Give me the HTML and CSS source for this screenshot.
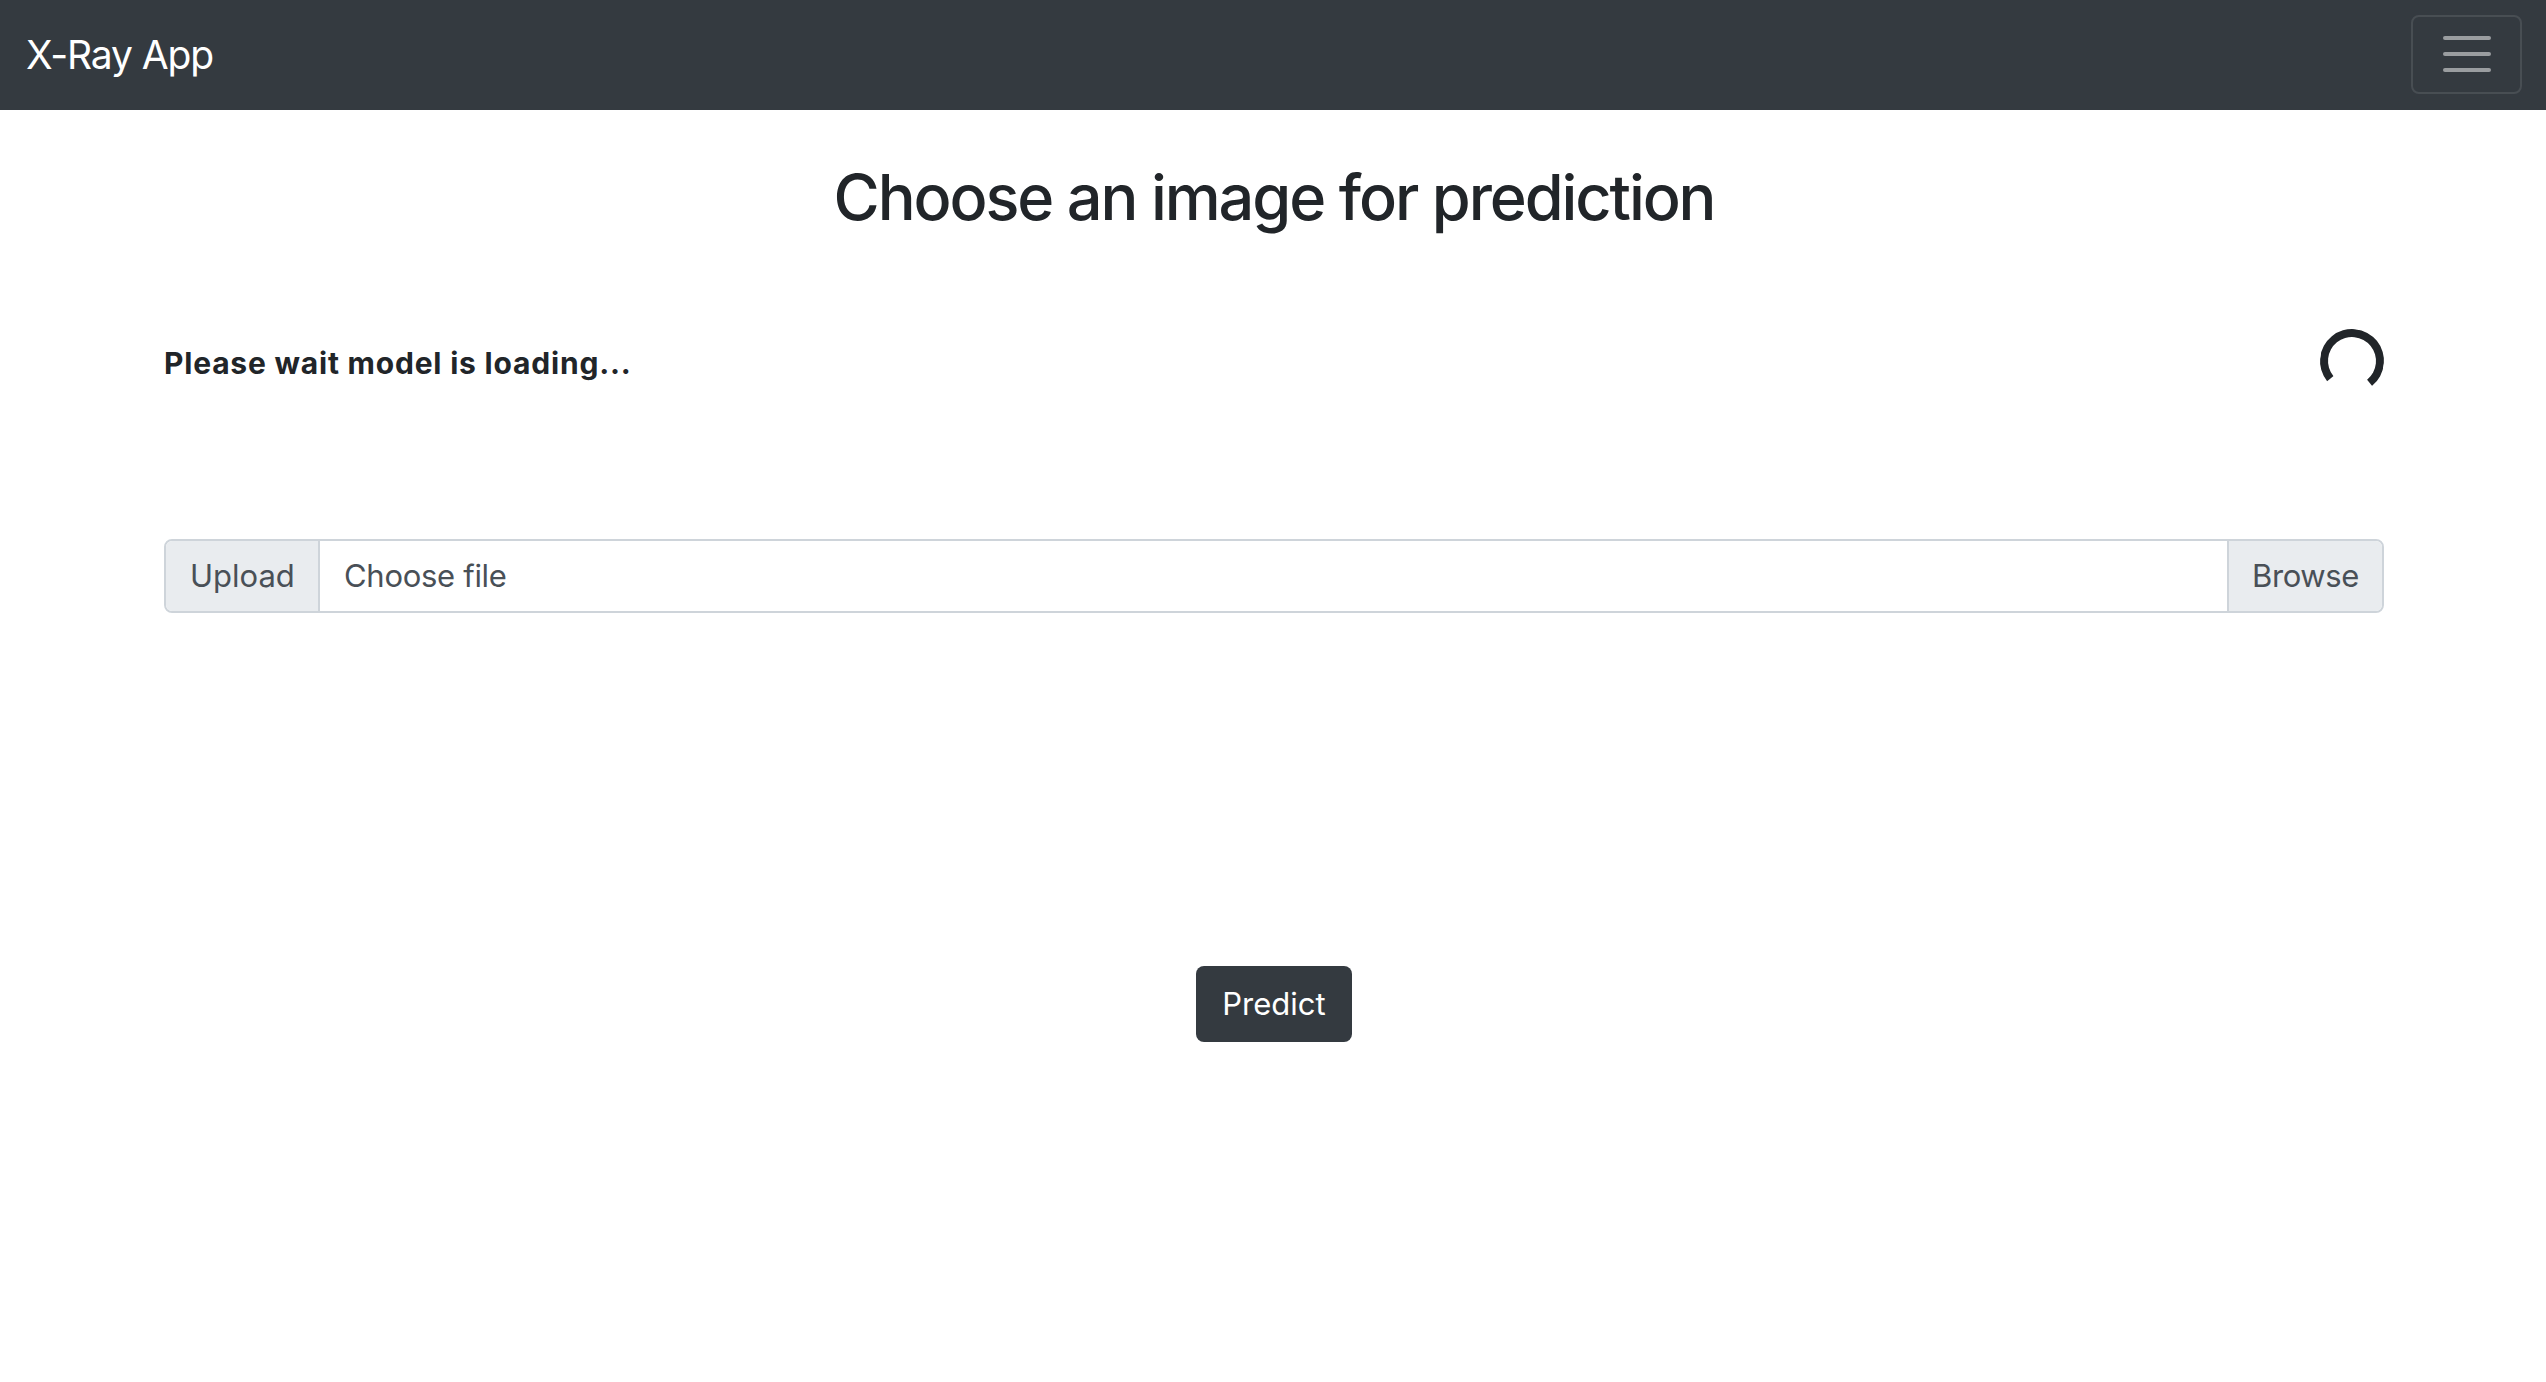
FILE: index.html
```html
<!DOCTYPE html>
<html lang="en">
<head>
<meta charset="utf-8">
<title>X-Ray App</title>
<link rel="stylesheet" href="styles.css">
</head>
<body>
<nav class="navbar">
  <a class="brand" href="#">X-Ray App</a>
  <button class="toggler" type="button" aria-label="Toggle navigation">
    <span class="bar"></span><span class="bar"></span><span class="bar"></span>
  </button>
</nav>
<main class="container">
  <h2 class="title">Choose an image for prediction</h2>
  <div class="loading-row">
    <span class="loading-text">Please wait model is loading...</span>
    <span class="spinner" role="status"></span>
  </div>
  <div class="input-group">
    <span class="addon">Upload</span>
    <label class="file-label">Choose file</label>
    <span class="browse">Browse</span>
  </div>
  <div class="actions">
    <button class="btn-predict" type="button">Predict</button>
  </div>
</main>
</body>
</html>
```
FILE: styles.css
```css
* { box-sizing: border-box; }
html, body { margin: 0; padding: 0; }
body {
  font-family: Inter, "Noto Sans", "Liberation Sans", sans-serif;
  color: #212529;
  background: #fff;
}
.navbar {
  height: 110px;
  background: #343a40;
  display: flex;
  align-items: center;
  justify-content: space-between;
  padding: 0 24px 0 26px;
}
.brand {
  color: #fff;
  text-decoration: none;
  font-size: 39px;
  line-height: 1.5;
  letter-spacing: -1.1px;
}
.toggler {
  width: 111px;
  height: 79px;
  background: transparent;
  border: 2px solid rgba(255,255,255,0.1);
  border-radius: 8px;
  display: flex;
  flex-direction: column;
  align-items: center;
  justify-content: center;
  gap: 12px;
  padding: 0;
  margin-top: -2px;
}
.bar {
  display: block;
  width: 48px;
  height: 4px;
  border-radius: 2px;
  background: rgba(255,255,255,0.5);
}
.container {
  padding: 50px 162px 0 164px;
}
.title {
  margin: 0;
  font-size: 63px;
  font-weight: 500;
  line-height: 1.2;
  text-align: center;
  letter-spacing: -2.1px;
}
.loading-row {
  margin-top: 93px;
  display: flex;
  align-items: center;
  justify-content: space-between;
}
.loading-text {
  font-size: 30px;
  font-weight: 700;
  line-height: 1.5;
  letter-spacing: 0.8px;
  padding-top: 5px;
}
.spinner {
  display: block;
  width: 64px;
  height: 64px;
  border: 8px solid #212529;
  border-bottom-color: transparent;
  border-radius: 50%;
  transform: rotate(6deg);
}
.input-group {
  margin-top: 146px;
  height: 74px;
  display: flex;
  border: 2px solid #ced4da;
  border-radius: 8px;
  overflow: hidden;
  font-size: 31px;
  color: #495057;
}
.addon, .browse {
  background: #e9ecef;
  display: flex;
  align-items: center;
  padding: 0 24px;
}
.addon {
  width: 154px;
  border-right: 2px solid #ced4da;
}
.browse {
  width: 155px;
  border-left: 2px solid #ced4da;
  padding-left: 23px;
  letter-spacing: -0.4px;
}
.file-label {
  flex: 1;
  display: flex;
  align-items: center;
  padding: 0 24px;
  background: #fff;
  letter-spacing: -0.3px;
}
.actions {
  margin-top: 353px;
  display: flex;
  justify-content: center;
}
.btn-predict {
  font-family: Inter, "Noto Sans", "Liberation Sans", sans-serif;
  width: 156px;
  height: 76px;
  background: #343a40;
  color: #fff;
  border: none;
  border-radius: 8px;
  font-size: 31px;
  padding: 0;
}
```
